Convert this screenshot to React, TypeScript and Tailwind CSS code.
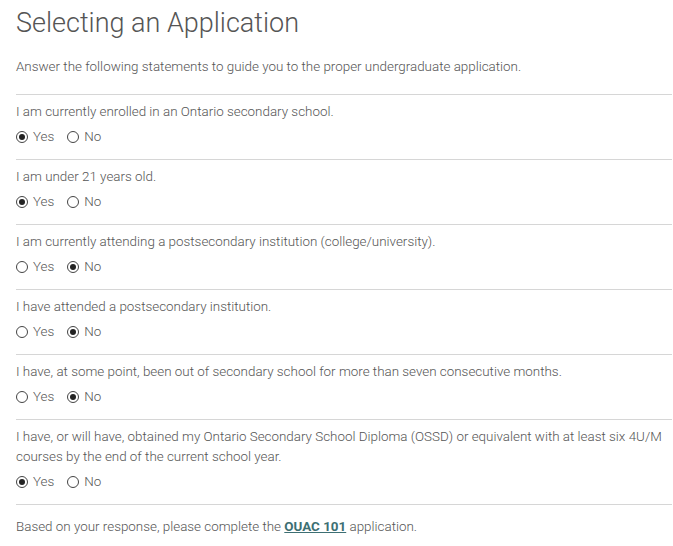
import { useState } from "react";

type Question = { id: string; text: string; answer: "yes" | "no" };

const questions: Question[] = [
  { id: "q1", text: "I am currently enrolled in an Ontario secondary school.", answer: "yes" },
  { id: "q2", text: "I am under 21 years old.", answer: "yes" },
  { id: "q3", text: "I am currently attending a postsecondary institution (college/university).", answer: "no" },
  { id: "q4", text: "I have attended a postsecondary institution.", answer: "no" },
  { id: "q5", text: "I have, at some point, been out of secondary school for more than seven consecutive months.", answer: "no" },
  {
    id: "q6",
    text: "I have, or will have, obtained my Ontario Secondary School Diploma (OSSD) or equivalent with at least six 4U/M courses by the end of the current school year.",
    answer: "yes",
  },
];

function Radio({ checked, label, onClick }: { checked: boolean; label: string; onClick: () => void }) {
  return (
    <button type="button" onClick={onClick} className="flex items-center gap-[5px] text-[13.4px] font-light text-[#555]">
      <span className="w-[12px] h-[12px] rounded-full border border-[#444] bg-white flex items-center justify-center">
        {checked && <span className="w-[6px] h-[6px] rounded-full bg-[#222]" />}
      </span>
      {label}
    </button>
  );
}

export default function App() {
  const [answers, setAnswers] = useState<Record<string, string>>(
    Object.fromEntries(questions.map((q) => [q.id, q.answer]))
  );

  return (
    <main
      className="min-h-screen bg-white pl-4 pr-[1px] text-[#555]"
      style={{ fontFamily: "Roboto, 'Noto Sans', sans-serif" }}
    >
      <h1 className="pt-[6px] text-[27px] leading-[34px] font-light text-[#555]">Selecting an Application</h1>
      <p className="mt-[17px] mb-[17px] text-[13.4px] leading-[20px] font-light text-[#555]">
        Answer the following statements to guide you to the proper undergraduate application.
      </p>

      {questions.map((q) => (
        <div key={q.id} className="border-t border-[#d6d6d6] pt-[7px] pb-[12px]">
          <p className="text-[13.4px] leading-[20px] font-light text-[#555]">{q.text}</p>
          <div className="mt-[5px] h-[20px] flex items-center gap-[13px]">
            <Radio
              checked={answers[q.id] === "yes"}
              label="Yes"
              onClick={() => setAnswers({ ...answers, [q.id]: "yes" })}
            />
            <Radio
              checked={answers[q.id] === "no"}
              label="No"
              onClick={() => setAnswers({ ...answers, [q.id]: "no" })}
            />
          </div>
        </div>
      ))}

      <div className="border-t border-[#d6d6d6] pt-[12px]">
        <p className="text-[13.4px] leading-[20px] font-light text-[#555]">
          Based on your response, please complete the{" "}
          <a href="#" className="font-bold underline text-[#3d6f73]">
            OUAC 101
          </a>{" "}
          application.
        </p>
      </div>
    </main>
  );
}
